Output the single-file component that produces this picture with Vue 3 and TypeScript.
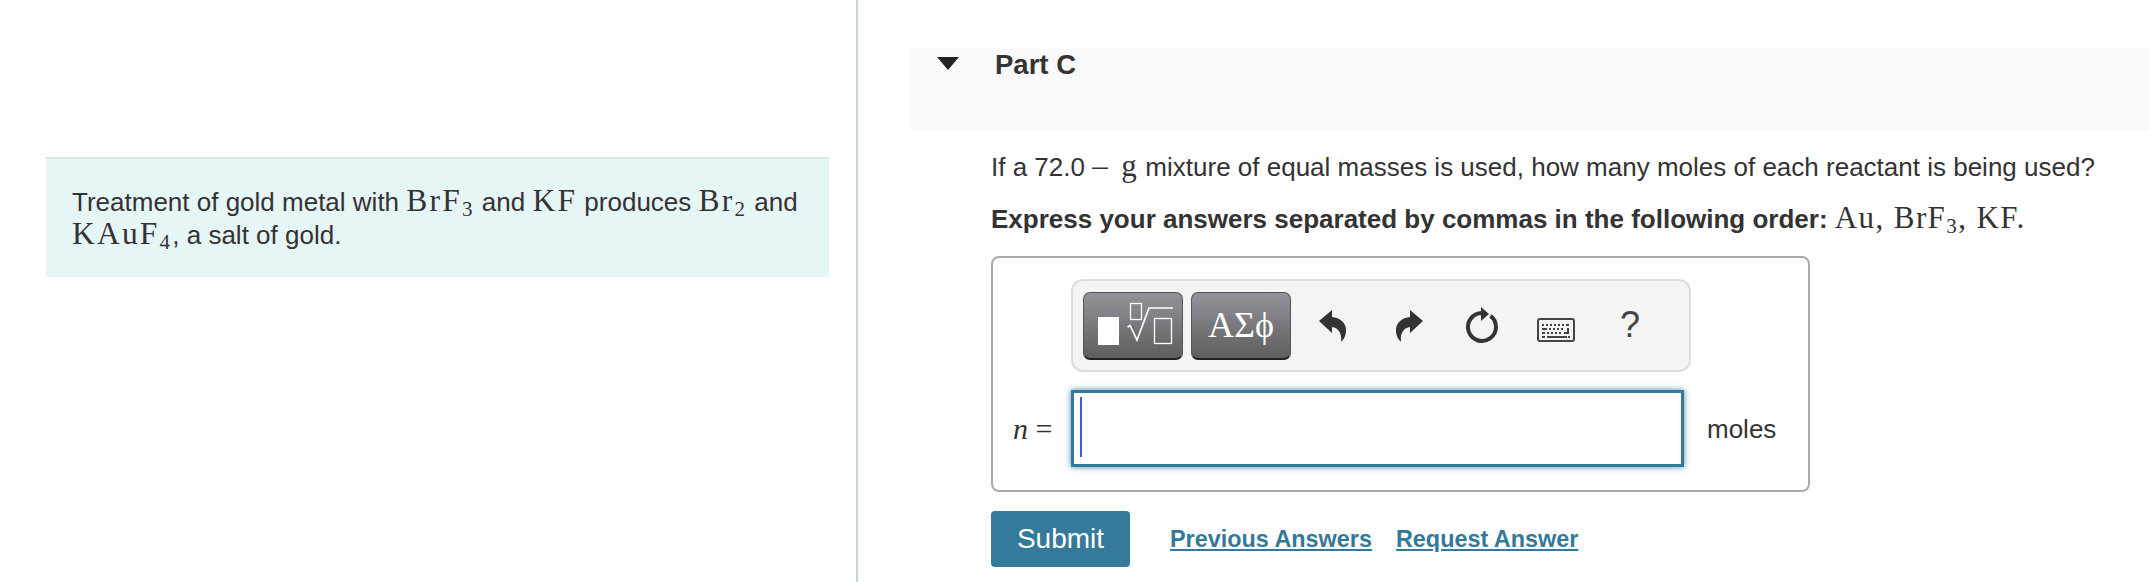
<script setup lang="ts">
const links = ['Previous Answers', 'Request Answer']
</script>

<template>
  <div class="page">
    <aside class="left">
      <div class="passage">
        Treatment of gold metal with <span class="math">BrF<sub>3</sub></span> and <span class="math">KF</span> produces <span class="math">Br<sub>2</sub></span> and
        <span class="math">KAuF<sub>4</sub></span>, a salt of gold.
      </div>
    </aside>

    <main class="right">
      <div class="part-head">
        <svg class="caret-icon" width="22" height="13" viewBox="0 0 22 13"><path d="M0 0H22L11 13Z" fill="#222" /></svg>
        <h2>Part C</h2>
      </div>

      <div class="part-body">
        <p class="question">If a 72.0 <span class="math dash">– g</span> mixture of equal masses is used, how many moles of each reactant is being used?</p>
        <p class="instruction">Express your answers separated by commas in the following order: <span class="math plain">Au, BrF<sub>3</sub>, KF.</span></p>

        <div class="answer-box">
          <div class="toolbar">
            <button class="tool-btn templates" type="button" aria-label="Templates">
              <svg width="78" height="46" viewBox="0 0 78 46" fill="none">
                <rect x="0" y="15" width="21" height="28" fill="#fff" />
                <rect x="32.500" y="1.500" width="11" height="16" stroke="#fff" stroke-width="1.300" />
                <path d="M29.600 25L32 23.500L39 38L51 6H75" stroke="#fff" stroke-width="1.700" />
                <rect x="56.500" y="16.500" width="17" height="25" stroke="#fff" stroke-width="1.300" />
              </svg>
            </button>
            <button class="tool-btn greek" type="button">ΑΣϕ</button>
            <svg class="ic undo" width="27" height="32" viewBox="0 0 27 32"><path d="M0 11L13 0V7C23 8 28 15 27 22C26.600 26 25 29 22 32C23 24 20 18 13 17V23Z" fill="#333" /></svg>
            <svg class="ic redo" width="27" height="32" viewBox="0 0 27 32"><path d="M27 11L14 0V7C4 8 -1 15 0 22C.4 26 2 29 5 32C4 24 7 18 14 17V23Z" fill="#333" /></svg>
            <svg class="ic reload" width="36" height="40" viewBox="0 0 36 40" fill="none">
              <path d="M18 6A14 14 0 1 0 26.500 8.900" stroke="#333" stroke-width="4" />
              <path d="M17 0L25 7L17 14Z" fill="#333" />
            </svg>
            <svg class="ic keys" width="38" height="24" viewBox="0 0 38 24">
              <rect x="1" y="1" width="36" height="22" rx="2" fill="#f4f4f4" stroke="#444" stroke-width="2" />
              <path d="M5 6h2v2H5zM9 6h2v2H9zM13 6h2v2h-2zM17 6h2v2h-2zM21 6h2v2h-2zM25 6h2v2h-2zM29 6h3v2h-3zM5 10h5v2H5zM12 10h2v2h-2zM16 10h2v2h-2zM20 10h2v2h-2zM24 10h2v2h-2zM30 10h2v6h-5v-2h3zM5 14h3v2H5zM10 14h2v2h-2zM14 14h2v2h-2zM18 14h2v2h-2zM22 14h2v2h-2zM5 18h3v2H5zM10 18h20v2H10zM31 18h2v2h-2z" fill="#444" />
            </svg>
            <span class="help">?</span>
          </div>

          <div class="answer-row">
            <span class="label"><i>n</i> =</span>
            <div class="input"><span class="cursor"></span></div>
            <span class="unit">moles</span>
          </div>
        </div>

        <div class="actions">
          <button class="submit" type="button">Submit</button>
          <a v-for="link in links" :key="link" href="#" class="link">{{ link }}</a>
        </div>
      </div>
    </main>
  </div>
</template>

<style>
body { background: #fff; overflow: hidden; }
</style>

<style scoped>
.page {
  display: flex;
  height: 582px;
  width: 2150px;
  font-family: "Liberation Sans", Arial, sans-serif;
  color: #333;
  font-size: 26px;
}
.left {
  width: 858px;
  flex-shrink: 0;
  box-sizing: border-box;
  padding: 157px 27px 0 46px;
  border-right: 2px solid #c5d4e2;
}
.passage {
  box-sizing: border-box;
  height: 120px;
  background: #e6f5f5;
  border-top: 2px solid #dfe3e3;
  padding: 27px 20px 0 26px;
  line-height: 33px;
}
.math {
  font-family: "Liberation Serif", "Times New Roman", serif;
  font-size: 31px;
  letter-spacing: 1.400px;
  line-height: 0;
}
.passage .math {
  font-size: 31.500px;
  letter-spacing: 2.200px;
}
.math.dash { word-spacing: 3px; }
.math sub {
  font-size: 21px;
  line-height: 0;
  vertical-align: -5px;
}
.right {
  flex: 1;
  padding: 49px 0 0 52px;
  min-width: 0;
}
.part-head {
  height: 81px;
  background: #f9f9f9;
  position: relative;
  padding-left: 85px;
}
.part-head h2 {
  margin: 0;
  font-size: 27.500px;
  line-height: 32px;
  color: #333;
}
.caret-icon {
  position: absolute;
  left: 27px;
  top: 8px;
}
.part-body {
  padding: 21px 0 0 81px;
}
.question {
  margin: 0;
  line-height: 32px;
  white-space: nowrap;
}
.instruction {
  margin: 20px 0 0;
  font-weight: 700;
  line-height: 32px;
  white-space: nowrap;
}
.math.plain { font-weight: 400; }
.answer-box {
  box-sizing: border-box;
  width: 819px;
  height: 236px;
  margin-top: 21px;
  border: 2px solid #aaa;
  border-radius: 8px;
  padding: 21px 0 0 78px;
}
.toolbar {
  box-sizing: border-box;
  width: 620px;
  height: 93px;
  display: flex;
  align-items: center;
  padding-left: 10px;
  background: #f4f4f4;
  border: 2px solid #ddd;
  border-radius: 12px;
}
.tool-btn {
  width: 100px;
  height: 68px;
  padding: 0;
  margin-right: 8px;
  display: flex;
  align-items: center;
  justify-content: center;
  background: linear-gradient(#93939b, #5e5e5e);
  border: 1px solid #555;
  border-bottom: 2px solid #222;
  border-radius: 7px;
  color: #fff;
}
.templates { padding-left: 8px; }
.greek {
  font-family: "Liberation Serif", serif;
  font-size: 36px;
}
.ic { flex-shrink: 0; }
.undo { margin-left: 20px; }
.redo { margin-left: 50px; }
.reload { margin-left: 41px; margin-top: 3px; }
.keys { margin-left: 37px; margin-top: 8px; }
.help {
  margin-left: 45px;
  font-size: 36px;
  color: #444;
  margin-top: -2px;
}
.answer-row {
  display: flex;
  align-items: center;
  margin-top: 18px;
}
.label {
  width: 58px;
  margin-left: -58px;
  font-family: "Liberation Serif", serif;
  font-size: 30px;
  flex-shrink: 0;
}
.input {
  box-sizing: border-box;
  width: 613px;
  height: 77px;
  padding: 4px 6px;
  border: 3px solid #337a9a;
  box-shadow: 0 0 6px rgba(51, 122, 154, 0.9);
  background: #fff;
  flex-shrink: 0;
}
.cursor {
  display: block;
  width: 2px;
  height: 60px;
  background: #3b5fd9;
}
.unit { margin-left: 23px; padding-top: 2px; }
.actions {
  display: flex;
  align-items: center;
  margin-top: 19px;
}
.submit {
  width: 139px;
  height: 56px;
  padding: 0;
  border: 0;
  border-radius: 4px;
  background: #35799b;
  color: #fff;
  font: 28px "Liberation Sans", Arial, sans-serif;
  margin-right: 40px;
}
.link {
  font-size: 23.400px;
  font-weight: 700;
  color: #337a9a;
  text-decoration: underline;
  margin-right: 24px;
}
</style>
